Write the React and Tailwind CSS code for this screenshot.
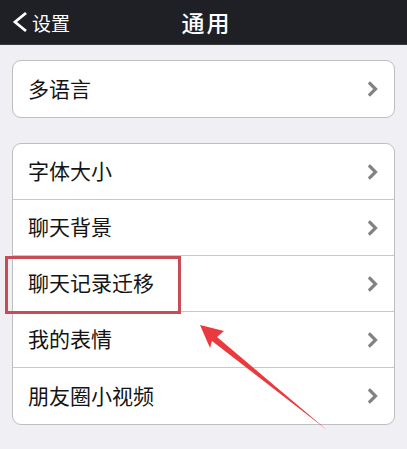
const GROUP_ONE = ['多语言'];
const GROUP_TWO = ['字体大小', '聊天背景', '聊天记录迁移', '我的表情', '朋友圈小视频'];

function Chevron() {
  return (
    <svg width="10" height="16" viewBox="0 0 10 16" className="shrink-0">
      <path d="M2 2.5 L7.5 8 L2 13.5" fill="none" stroke="#838387" strokeWidth="3.2" strokeLinecap="square" />
    </svg>
  );
}

function Row({ label, last }) {
  return (
    <div className={`h-[56px] flex items-center justify-between pl-[15px] pr-[16px] ${last ? '' : 'border-b border-[#c8c8cc]'}`}>
      <span className="text-[21px] text-[#141414] leading-none -mt-[2px]">{label}</span>
      <Chevron />
    </div>
  );
}

function Group({ items }) {
  return (
    <div className="mx-[12px] bg-white border border-[#bdbdc2] rounded-[9px] overflow-hidden">
      {items.map((t, i) => (
        <Row key={t} label={t} last={i === items.length - 1} />
      ))}
    </div>
  );
}

export default function App() {
  return (
    <div
      className="relative w-[407px] h-[449px] bg-[#efeff4] overflow-hidden"
      style={{ fontFamily: '"Noto Sans CJK SC", "Noto Sans", sans-serif' }}
    >
      {/* 顶栏 */}
      <div className="h-[45px] bg-[#1f2025] border-b border-[#3a3b40] flex items-center relative">
        <div className="flex items-center pl-[11px] gap-[3px]">
          <svg width="18" height="22" viewBox="0 0 18 22">
            <path d="M15 2 L4 11 L15 20" fill="none" stroke="#ffffff" strokeWidth="2.8" />
          </svg>
          <span className="text-white text-[19px] leading-none">设置</span>
        </div>
        <div className="absolute inset-x-0 top-0 h-full flex items-center justify-center pointer-events-none">
          <span className="text-white text-[23px] font-medium tracking-[2px] leading-none ml-[6px]">通用</span>
        </div>
      </div>

      <div className="pt-[15px]">
        <Group items={GROUP_ONE} />
        <div className="h-[25px]" />
        <Group items={GROUP_TWO} />
      </div>

      {/* 标注：红框 */}
      <div className="absolute left-[5px] top-[256px] w-[176px] h-[58px] border-[3px] border-[#c84c55]" />

      {/* 标注：箭头 */}
      <svg className="absolute left-0 top-0" width="407" height="449" viewBox="0 0 407 449">
        <path d="M200 325 L224 331 L217 337 L327 430 L212 341 L210 348 Z" fill="#ea3a3f" />
      </svg>
    </div>
  );
}
